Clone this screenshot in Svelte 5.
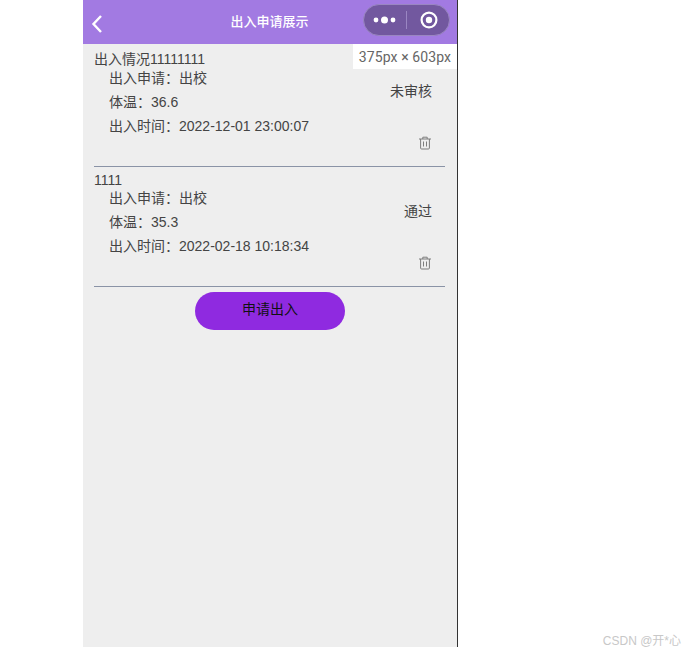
<script>
	const records = [
		{ title: '出入情况11111111', apply: '出校', temp: '36.6', time: '2022-12-01 23:00:07', status: '未审核' },
		{ title: '1111', apply: '出校', temp: '35.3', time: '2022-02-18 10:18:34', status: '通过' }
	];
</script>

<div class="stage">
	<div class="phone">
		<header class="navbar">
			<svg class="back" width="12" height="20" viewBox="0 0 12 20" fill="none" stroke="#fff" stroke-width="2.4">
				<path d="M10 2 L2.5 10 L10 18"></path>
			</svg>
			<span class="nav-title">出入申请展示</span>
			<div class="capsule">
				<svg width="24" height="10" viewBox="0 0 24 10" fill="#fff">
					<circle cx="3" cy="5" r="2.4"></circle>
					<circle cx="11.5" cy="5" r="3.5"></circle>
					<circle cx="20" cy="5" r="2.4"></circle>
				</svg>
				<span class="sep"></span>
				<svg width="18" height="18" viewBox="0 0 18 18">
					<circle cx="9" cy="9" r="7.4" fill="none" stroke="#fff" stroke-width="2.2"></circle>
					<circle cx="9" cy="9" r="3.2" fill="#fff"></circle>
				</svg>
			</div>
		</header>
		<span class="size-tag">375px × 603px</span>

		<main class="content">
			{#each records as r}
				<section class="record">
					<div class="title">{r.title}</div>
					<div class="row">
						<div class="fields">
							<p>出入申请：{r.apply}</p>
							<p>体温：{r.temp}</p>
							<p>出入时间：{r.time}</p>
						</div>
						<div class="side">
							<span class="status">{r.status}</span>
							<svg class="trash" width="14" height="14" viewBox="0 0 14 14" fill="none" stroke="#7d7d7d" stroke-width="1">
								<path d="M1 3 H13"></path>
								<path d="M4.8 3 V1.2 H9.2 V3"></path>
								<path d="M2.6 3 V12 Q2.6 13 3.6 13 H10.4 Q11.4 13 11.4 12 V3"></path>
								<path d="M5.5 5.5 V10.5 M8.5 5.5 V10.5"></path>
							</svg>
						</div>
					</div>
				</section>
			{/each}
			<button class="apply">申请出入</button>
		</main>
	</div>
	<span class="watermark">CSDN @开*心</span>
</div>

<style>
	:global(body) {
		margin: 0;
		background: #fff;
	}

	.stage {
		position: relative;
		width: 690px;
		height: 654px;
		overflow: hidden;
		font-family: "Liberation Sans", "Noto Sans CJK SC", sans-serif;
	}

	.phone {
		position: relative;
		margin-left: 83px;
		width: 374px;
		height: 647px;
		background: #eee;
		border-right: 1px solid #333;
	}

	.navbar {
		display: flex;
		align-items: center;
		justify-content: center;
		position: relative;
		height: 44px;
		background: #a27ae2;
	}

	.back {
		position: absolute;
		left: 8px;
		top: 14px;
	}

	.nav-title {
		color: #fff;
		font-size: 13px;
		font-weight: 500;
		margin-bottom: 3px;
		margin-right: 1px;
	}

	.capsule {
		position: absolute;
		left: 280px;
		top: 4px;
		box-sizing: border-box;
		width: 87px;
		height: 32px;
		display: flex;
		align-items: center;
		padding-left: 9px;
		background: #72589f;
		border: 1px solid #9a86c2;
		border-radius: 16px;
	}

	.sep {
		width: 1px;
		height: 18px;
		margin: 0 13px 0 9px;
		background: #9a86c2;
	}

	.size-tag {
		position: absolute;
		right: 0;
		top: 44px;
		width: 104px;
		height: 25px;
		line-height: 27px;
		text-align: center;
		background: #fff;
		color: #666;
		font-size: 14px;
		letter-spacing: 0.1px;
		font-family: "Roboto", "Liberation Sans", sans-serif;
		z-index: 1;
	}

	.content {
		display: flex;
		flex-direction: column;
		padding: 7.3px 12px 0 11px;
	}

	.record {
		height: 114.7px;
		margin-bottom: 4.7px;
		border-bottom: 1px solid #8a93a6;
		color: #444;
		font-size: 14px;
	}

	.title {
		height: 14.6px;
		line-height: 16px;
	}

	.row {
		display: flex;
		justify-content: space-between;
	}

	.fields {
		padding-left: 15px;
	}

	.fields p {
		margin: 0;
		height: 24px;
		line-height: 24px;
	}

	.side {
		display: flex;
		flex-direction: column;
		align-items: flex-end;
		padding-right: 13px;
	}

	.status {
		margin-top: 13px;
		line-height: 24px;
	}

	.trash {
		margin-top: 33px;
	}

	.apply {
		align-self: center;
		width: 150px;
		height: 38px;
		margin-right: -1px;
		padding: 0 0 6px;
		border: none;
		border-radius: 19px;
		background: #8f2ae0;
		color: #111;
		font-size: 14px;
		font-family: inherit;
	}

	.watermark {
		position: absolute;
		right: 9px;
		bottom: 6px;
		font-size: 12px;
		color: #c8c8c8;
	}
</style>
